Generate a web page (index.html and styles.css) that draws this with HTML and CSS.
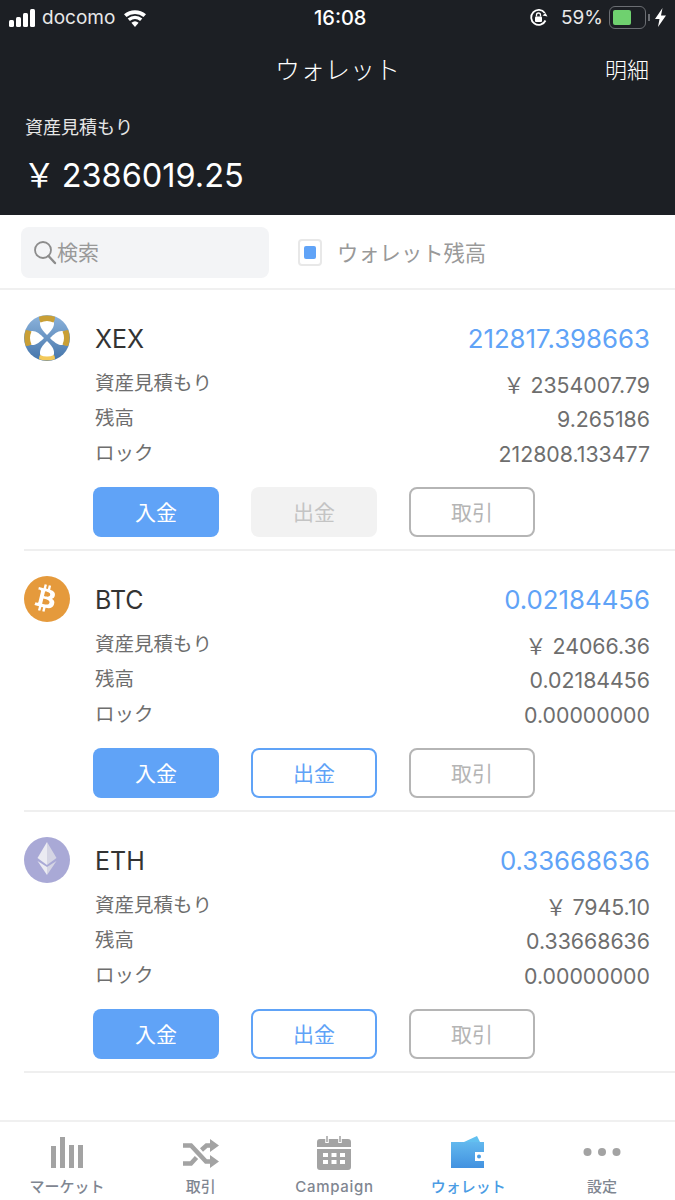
FILE: index.html
```html
<!DOCTYPE html>
<html lang="ja">
<head>
    <meta charset="UTF-8">
    <meta name="viewport" content="width=device-width, initial-scale=1.0">
    <title>ウォレット</title>
    <link rel="stylesheet" href="styles.css">
</head>
<body>
    <div class="app">
        <header class="header">
            <div class="status-bar">
                <div class="status-left">
                    <svg class="signal" width="28" height="18" viewBox="0 0 28 18"><rect x="0" y="11" width="5" height="7" rx="1.5"/><rect x="7" y="8" width="5" height="10" rx="1.5"/><rect x="14" y="4" width="5" height="14" rx="1.5"/><rect x="21" y="0" width="5" height="18" rx="1.5"/></svg>
                    <span class="carrier">docomo</span>
                    <svg class="wifi" width="24" height="18" viewBox="0 0 24 18"><path d="M12 18l-3.600-4.300a5.500 5.500 0 0 1 7.200 0z"/><path d="M6.900 12l-2.200-2.600a11.500 11.500 0 0 1 14.600 0L17.100 12a8.200 8.200 0 0 0-10.200 0z"/><path d="M3.500 8L1 5.200a17 17 0 0 1 22 0L20.500 8a13.400 13.400 0 0 0-17 0z"/></svg>
                </div>
                <div class="status-time">16:08</div>
                <div class="status-right">
                    <svg class="lock" width="20" height="20" viewBox="0 0 20 20"><path d="M16.500 12.500A7.500 7.500 0 1 1 15.800 5" fill="none" stroke="#fff" stroke-width="1.800"/><path d="M18.500 8.500l-2-3.500-3 2.600z" fill="#fff"/><rect x="6" y="8.500" width="7" height="5.500" rx="1" fill="#fff"/><path d="M7.500 8.500V7a2 2 0 0 1 4 0v1.500" fill="none" stroke="#fff" stroke-width="1.300"/></svg>
                    <span class="battery-text">59%</span>
                    <div class="battery"><div class="battery-level"></div></div>
                    <div class="battery-cap"></div>
                    <svg class="bolt" width="11" height="19" viewBox="0 0 11 19"><path d="M7.500 0L0 11h4.500L3 19l8-11.500H6z" fill="#fff"/></svg>
                </div>
            </div>
            <div class="nav-bar">
                <h1 class="nav-title">ウォレット</h1>
                <a href="#" class="nav-link">明細</a>
            </div>
            <div class="total-label">資産見積もり</div>
            <div class="total-value">￥ 2386019.25</div>
        </header>

        <div class="filter-bar">
            <div class="search">
                <svg class="search-icon" width="24" height="25" viewBox="0 0 24 25"><circle cx="10" cy="10" r="8" fill="none" stroke="#8c8c8c" stroke-width="1.800"/><path d="M15.500 16l6.500 7" fill="none" stroke="#8c8c8c" stroke-width="2.400" stroke-linecap="round"/></svg>
                <span class="search-text">検索</span>
            </div>
            <div class="checkbox"><div class="checkbox-dot"></div></div>
            <span class="checkbox-label">ウォレット残高</span>
        </div>

        <div class="coin-list">
            <div class="coin">
                <svg class="coin-icon" width="46" height="46" viewBox="0 0 46 46">
                    <defs>
                        <linearGradient id="xex-blue" x1="0" y1="0" x2="0" y2="1"><stop offset="0" stop-color="#8db4dc"/><stop offset="1" stop-color="#4474aa"/></linearGradient>
                    </defs>
                    <circle cx="23" cy="23" r="23" fill="url(#xex-blue)"/>
                    <path d="M23 20C19 16 15.500 12 16 7.500C16.500 4 19 1 23 1C27 1 29.500 4 30 7.500C30.500 12 27 16 23 20z" fill="#fff"/>
                    <path d="M23 26C19 30 15.500 34 16 38.500C16.500 42 19 45 23 45C27 45 29.500 42 30 38.500C30.500 34 27 30 23 26z" fill="#fff"/>
                    <path d="M20 23C16 19 12 15.500 7.500 16C4 16.500 1 19 1 23C1 27 4 29.500 7.500 30C12 30.500 16 27 20 23z" fill="#fff"/>
                    <path d="M26 23C30 19 34 15.500 38.500 16C42 16.500 45 19 45 23C45 27 42 29.500 38.500 30C34 30.500 30 27 26 23z" fill="#fff"/>
                    <path d="M15 1.800Q23-1 31 1.800Q31 5 29.500 7.500Q23 4.500 16.500 7.500Q15 5 15 1.800z" fill="#c99f35"/>
                    <path d="M15 44.200Q23 47 31 44.200Q31 41.500 30 40Q23 43 16 40Q15 41.500 15 44.200z" fill="#f3c95a"/>
                    <path d="M1.800 15Q-1 23 1.800 31Q5 31 7.500 29.500Q4.500 23 7.500 16.500Q5 15 1.800 15z" fill="#c99f35"/>
                    <path d="M44.200 15Q47 23 44.200 31Q41 31 38.500 29.500Q41.500 23 38.500 16.500Q41 15 44.200 15z" fill="#c99f35"/>
                </svg>
                <div class="coin-body">
                    <div class="coin-head"><span class="coin-name">XEX</span><span class="coin-amount">212817.398663</span></div>
                    <div class="coin-line"><span>資産見積もり</span><span>￥ 2354007.79</span></div>
                    <div class="coin-line"><span>残高</span><span>9.265186</span></div>
                    <div class="coin-line"><span>ロック</span><span>212808.133477</span></div>
                    <div class="coin-actions">
                        <button class="btn btn-primary">入金</button>
                        <button class="btn btn-disabled">出金</button>
                        <button class="btn btn-grey">取引</button>
                    </div>
                </div>
            </div>

            <div class="coin">
                <svg class="coin-icon" width="46" height="46" viewBox="0 0 46 46">
                    <circle cx="23" cy="23" r="23" fill="#e59a3c"/>
                    <g transform="translate(-3.500 -3.500) scale(1.150)">
                        <path d="M29.900 19.700c.4-2.500-1.500-3.800-4.100-4.700l.8-3.400-2-.5-.8 3.300-1.600-.4.800-3.300-2-.5-.9 3.400-4.100-1-.5 2.200s1.500.3 1.500.4c.8.200 1 .8.900 1.200l-2.300 9.300c-.1.300-.4.700-1 .6 0 0-1.500-.4-1.500-.4l-1 2.400 4 1-.9 3.500 2 .5.900-3.400 1.600.4-.8 3.400 2 .5.900-3.500c3.500.7 6.200.4 7.300-2.800.9-2.600 0-4-1.900-5 1.400-.3 2.400-1.200 2.700-3.200zm-4.700 6.600c-.6 2.600-5 1.200-6.400.8l1.100-4.600c1.400.4 6 1.100 5.300 3.800zm.6-6.700c-.6 2.300-4.200 1.100-5.400.8l1-4.100c1.200.3 5 .9 4.400 3.300z" fill="#fff"/>
                    </g>
                </svg>
                <div class="coin-body">
                    <div class="coin-head"><span class="coin-name">BTC</span><span class="coin-amount">0.02184456</span></div>
                    <div class="coin-line"><span>資産見積もり</span><span>￥ 24066.36</span></div>
                    <div class="coin-line"><span>残高</span><span>0.02184456</span></div>
                    <div class="coin-line"><span>ロック</span><span>0.00000000</span></div>
                    <div class="coin-actions">
                        <button class="btn btn-primary">入金</button>
                        <button class="btn btn-outline">出金</button>
                        <button class="btn btn-grey">取引</button>
                    </div>
                </div>
            </div>

            <div class="coin">
                <svg class="coin-icon" width="46" height="46" viewBox="0 0 46 46">
                    <circle cx="23" cy="23" r="23" fill="#a9a9d6"/>
                    <path d="M23 5L13.500 21 23 28z" fill="#ebebf2"/>
                    <path d="M23 5l9.500 16L23 28z" fill="#d5d5e4"/>
                    <path d="M13.500 24L23 38V30z" fill="#ebebf2"/>
                    <path d="M32.500 24L23 38V30z" fill="#d5d5e4"/>
                </svg>
                <div class="coin-body">
                    <div class="coin-head"><span class="coin-name">ETH</span><span class="coin-amount">0.33668636</span></div>
                    <div class="coin-line"><span>資産見積もり</span><span>￥ 7945.10</span></div>
                    <div class="coin-line"><span>残高</span><span>0.33668636</span></div>
                    <div class="coin-line"><span>ロック</span><span>0.00000000</span></div>
                    <div class="coin-actions">
                        <button class="btn btn-primary">入金</button>
                        <button class="btn btn-outline">出金</button>
                        <button class="btn btn-grey">取引</button>
                    </div>
                </div>
            </div>
        </div>

        <nav class="tab-bar">
            <a href="#" class="tab">
                <svg width="34" height="34" viewBox="0 0 34 34"><g fill="#a3a3a3"><rect x="1" y="10" width="5" height="22"/><rect x="10" y="1" width="5" height="31"/><rect x="19" y="9" width="5" height="23"/><rect x="28" y="9" width="5" height="23"/></g></svg>
                <span>マーケット</span>
            </a>
            <a href="#" class="tab">
                <svg width="36" height="34" viewBox="0 0 36 34"><path d="M0 9.500h8l15 16h5M0 27.500h8l5.500-6M18.500 14l5-4.500h4.500" fill="none" stroke="#a3a3a3" stroke-width="4.500"/><path d="M27 3l9 6.500-9 6.500zM27 19l9 6.500-9 6.500z" fill="#a3a3a3"/></svg>
                <span>取引</span>
            </a>
            <a href="#" class="tab">
                <svg width="34" height="34" viewBox="0 0 34 34"><path d="M3 3h28a3 3 0 0 1 3 3v5H0V6a3 3 0 0 1 3-3zM0 13h34v18a3 3 0 0 1-3 3H3a3 3 0 0 1-3-3z" fill="#a3a3a3"/><path d="M10 1v6M23 1v6" stroke="#fff" stroke-width="3.500"/><path d="M10 0v6M23 0v6" stroke="#a3a3a3" stroke-width="1.500"/><g fill="#fff"><rect x="6" y="17" width="5" height="4"/><rect x="14.500" y="17" width="5" height="4"/><rect x="23" y="17" width="5" height="4"/><rect x="6" y="24" width="5" height="4"/><rect x="14.500" y="24" width="5" height="4"/><rect x="23" y="24" width="5" height="4"/></g></svg>
                <span class="tab-latin">Campaign</span>
            </a>
            <a href="#" class="tab tab-active">
                <svg width="34" height="34" viewBox="0 0 34 34"><defs><linearGradient id="wallet" x1="0" y1="0" x2="0" y2="1"><stop offset="0" stop-color="#62b8ee"/><stop offset="1" stop-color="#4291e0"/></linearGradient></defs><path d="M13 6L26 0l3 6z" fill="#62c0f0"/><path d="M0 6h33v10h-9v9h9v7H0z" fill="url(#wallet)"/><circle cx="28" cy="20.500" r="2" fill="#4a9ce4"/></svg>
                <span>ウォレット</span>
            </a>
            <a href="#" class="tab">
                <svg width="38" height="34" viewBox="0 0 38 34"><g fill="#a3a3a3"><circle cx="4.500" cy="16" r="4"/><circle cx="19" cy="16" r="4"/><circle cx="33.500" cy="16" r="4"/></g></svg>
                <span>設定</span>
            </a>
        </nav>
    </div>
</body>
</html>
```

FILE: styles.css
```css
* {
    box-sizing: border-box;
}
body {
    margin: 0;
    background-color: #fff;
    color: #333;
    font-family: Inter, "Noto Sans CJK JP", sans-serif;
}
.app {
    width: 675px;
    height: 1200px;
    display: flex;
    flex-direction: column;
    overflow: hidden;
}

/* header */
.header {
    height: 215px;
    background-color: #1c1f24;
    color: #fff;
}
.status-bar {
    height: 35px;
    padding: 0 9px;
    display: flex;
    align-items: center;
    justify-content: space-between;
    position: relative;
}
.status-left, .status-right {
    display: flex;
    align-items: center;
}
.signal {
    fill: #fff;
}
.carrier {
    margin-left: 5px;
    font-size: 19px;
    color: #e8e8e8;
}
.wifi {
    margin-left: 8px;
    fill: #fff;
}
.status-time {
    position: absolute;
    left: 314px;
    font-size: 20px;
    font-weight: 500;
}
.battery-text {
    margin-left: 12px;
    font-size: 19px;
    color: #e8e8e8;
}
.battery {
    width: 37px;
    height: 23px;
    margin-left: 6px;
    padding: 3px;
    border: 1.5px solid #6b6e73;
    border-radius: 6px;
}
.battery-level {
    width: 62%;
    height: 100%;
    background-color: #6fd16f;
    border-radius: 2px;
}
.battery-cap {
    width: 2px;
    height: 7px;
    margin-left: 2px;
    background-color: #6b6e73;
}
.bolt {
    margin-left: 5px;
}
.nav-bar {
    height: 65px;
    display: flex;
    align-items: center;
    justify-content: center;
    position: relative;
}
.nav-title {
    margin: 0;
    font-size: 25px;
    font-weight: 300;
}
.nav-link {
    position: absolute;
    right: 26px;
    color: #fff;
    font-size: 22px;
    font-weight: 300;
    text-decoration: none;
}
.total-label {
    margin: 17px 0 0 25px;
    font-size: 18px;
    line-height: 22px;
    color: #e6e6e6;
}
.total-value {
    margin: 19px 0 0 23px;
    font-size: 32.500px;
    line-height: 36px;
    word-spacing: -3px;
}

/* filter */
.filter-bar {
    height: 75px;
    padding: 12px 0 11px 21px;
    display: flex;
    align-items: center;
    border-bottom: 2px solid #f0f0f0;
    color: #999;
    font-size: 21px;
}
.search {
    width: 248px;
    height: 51px;
    padding: 0 12px;
    display: flex;
    align-items: center;
    background-color: #f3f4f6;
    border-radius: 8px;
}
.search-text {
    margin-bottom: 3px;
}
.checkbox {
    width: 24px;
    height: 27px;
    margin-left: 29px;
    padding: 5px 4px;
    border: 2px solid #e8e8e8;
    border-radius: 4px;
}
.checkbox-dot {
    width: 12px;
    height: 13px;
    background-color: #60a3f7;
    border-radius: 2px;
}
.checkbox-label {
    margin: 0 0 2px 15px;
    font-size: 21.300px;
}

/* coins */
.coin-list {
    flex: 1;
    padding-left: 24px;
}
.coin {
    height: 261px;
    padding-top: 25px;
    display: flex;
    border-bottom: 2px solid #efefef;
}
.coin-icon {
    flex-shrink: 0;
}
.coin-body {
    flex: 1;
    margin-left: 25px;
    padding-right: 25px;
}
.coin-head {
    height: 47px;
    margin-bottom: 2px;
    display: flex;
    align-items: center;
    justify-content: space-between;
}
.coin-name {
    font-size: 25px;
}
.coin-amount {
    font-size: 25.800px;
    color: #60a3f7;
}
.coin-line {
    height: 35px;
    display: flex;
    align-items: center;
    justify-content: space-between;
    font-size: 21.300px;
    color: #6e6e6e;
}
.coin-line span:first-child {
    font-size: 19.500px;
}
.coin-line span:last-child {
    margin-top: 4px;
}
.coin-actions {
    margin: 18px 0 0 -2px;
    display: flex;
    gap: 32px;
}
.btn {
    width: 126px;
    height: 50px;
    padding: 0 0 3px;
    border: none;
    border-radius: 8px;
    background: none;
    font-family: inherit;
    font-size: 21px;
}
.btn-primary {
    background-color: #60a3f7;
    color: #fff;
}
.btn-disabled {
    background-color: #f2f2f2;
    color: #c4c4c4;
}
.btn-outline {
    border: 2px solid #60a3f7;
    color: #60a3f7;
}
.btn-grey {
    border: 2px solid #b5b5b5;
    color: #b5b5b5;
}

/* tabs */
.tab-bar {
    height: 80px;
    padding-right: 6px;
    display: flex;
    border-top: 2px solid #f0f0f0;
}
.tab {
    flex: 1;
    padding-top: 14px;
    display: flex;
    flex-direction: column;
    align-items: center;
    color: #7f8691;
    font-size: 15px;
    font-weight: 500;
    text-decoration: none;
}
.tab span {
    margin-top: 7px;
    line-height: 20px;
}
.tab .tab-latin {
    letter-spacing: 0.7px;
}
.tab-active {
    color: #4a9ce4;
}
```
